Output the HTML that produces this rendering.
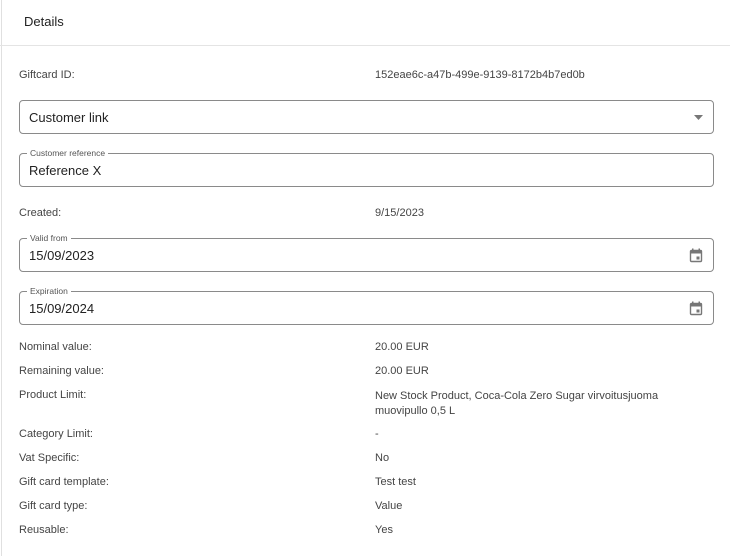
<!DOCTYPE html>
<html><head><meta charset="utf-8"><style>
*{margin:0;padding:0;box-sizing:border-box}
body{width:730px;height:556px;background:#fff;font-family:"Liberation Sans",sans-serif;color:#333;position:relative;overflow:hidden}
.card{position:absolute;left:1px;top:0;width:729px;height:556px;border-left:1px solid #e0e0e0}
.hdr{position:absolute;left:0;top:45px;width:730px;height:1px;background:#e4e4e4}
.t{position:absolute;font-size:11px;color:#444;white-space:nowrap}
.h{position:absolute;left:24px;top:14px;font-size:13px;color:#222}
.box{position:absolute;left:19px;width:695px;height:34px;border:1px solid #8a8a8a;border-radius:4px}
.box .v{position:absolute;left:9px;top:9px;font-size:13px;color:#222}
.box .lg{position:absolute;left:7px;top:-6px;background:#fff;padding:0 3px;font-size:8.5px;color:#555;line-height:10px}
.cal{position:absolute;right:10px;top:9px}
</style></head><body>
<div class="card"></div>
<div class="h">Details</div>
<div class="hdr"></div>
<div class="t" style="left:19px;top:69px">Giftcard ID:</div>
<div class="t" style="left:375px;top:69px">152eae6c-a47b-499e-9139-8172b4b7ed0b</div>
<div class="box" style="top:100px"><div class="v">Customer link</div>
<svg style="position:absolute;right:9px;top:14px" width="10" height="6"><path d="M0 0h9l-4.5 5z" fill="#777"/></svg></div>
<div class="box" style="top:153px"><div class="lg">Customer reference</div><div class="v">Reference X</div></div>
<div class="t" style="left:19px;top:207px">Created:</div>
<div class="t" style="left:375px;top:207px">9/15/2023</div>
<div class="box" style="top:238px"><div class="lg">Valid from</div><div class="v">15/09/2023</div>
<svg class="cal" width="14" height="15" viewBox="0 0 14 15"><rect x="1.5" y="2.5" width="11" height="11" rx="1" fill="none" stroke="#777" stroke-width="1.4"/><rect x="1.5" y="2.5" width="11" height="3" fill="#777"/><rect x="3" y="0.5" width="1.5" height="3" fill="#777"/><rect x="9.5" y="0.5" width="1.5" height="3" fill="#777"/><rect x="7.5" y="8.5" width="3" height="3" fill="#777"/></svg></div>
<div class="box" style="top:291px"><div class="lg">Expiration</div><div class="v">15/09/2024</div>
<svg class="cal" width="14" height="15" viewBox="0 0 14 15"><rect x="1.5" y="2.5" width="11" height="11" rx="1" fill="none" stroke="#777" stroke-width="1.4"/><rect x="1.5" y="2.5" width="11" height="3" fill="#777"/><rect x="3" y="0.5" width="1.5" height="3" fill="#777"/><rect x="9.5" y="0.5" width="1.5" height="3" fill="#777"/><rect x="7.5" y="8.5" width="3" height="3" fill="#777"/></svg></div>
<div class="t" style="left:19px;top:341px">Nominal value:</div><div class="t" style="left:375px;top:341px">20.00 EUR</div>
<div class="t" style="left:19px;top:365px">Remaining value:</div><div class="t" style="left:375px;top:365px">20.00 EUR</div>
<div class="t" style="left:19px;top:389px">Product Limit:</div><div class="t" style="left:375px;top:389px;line-height:15px">New Stock Product, Coca-Cola Zero Sugar virvoitusjuoma<br>muovipullo 0,5 L</div>
<div class="t" style="left:19px;top:428px">Category Limit:</div><div class="t" style="left:375px;top:428px">-</div>
<div class="t" style="left:19px;top:452px">Vat Specific:</div><div class="t" style="left:375px;top:452px">No</div>
<div class="t" style="left:19px;top:476px">Gift card template:</div><div class="t" style="left:375px;top:476px">Test test</div>
<div class="t" style="left:19px;top:500px">Gift card type:</div><div class="t" style="left:375px;top:500px">Value</div>
<div class="t" style="left:19px;top:524px">Reusable:</div><div class="t" style="left:375px;top:524px">Yes</div>
</body></html>
